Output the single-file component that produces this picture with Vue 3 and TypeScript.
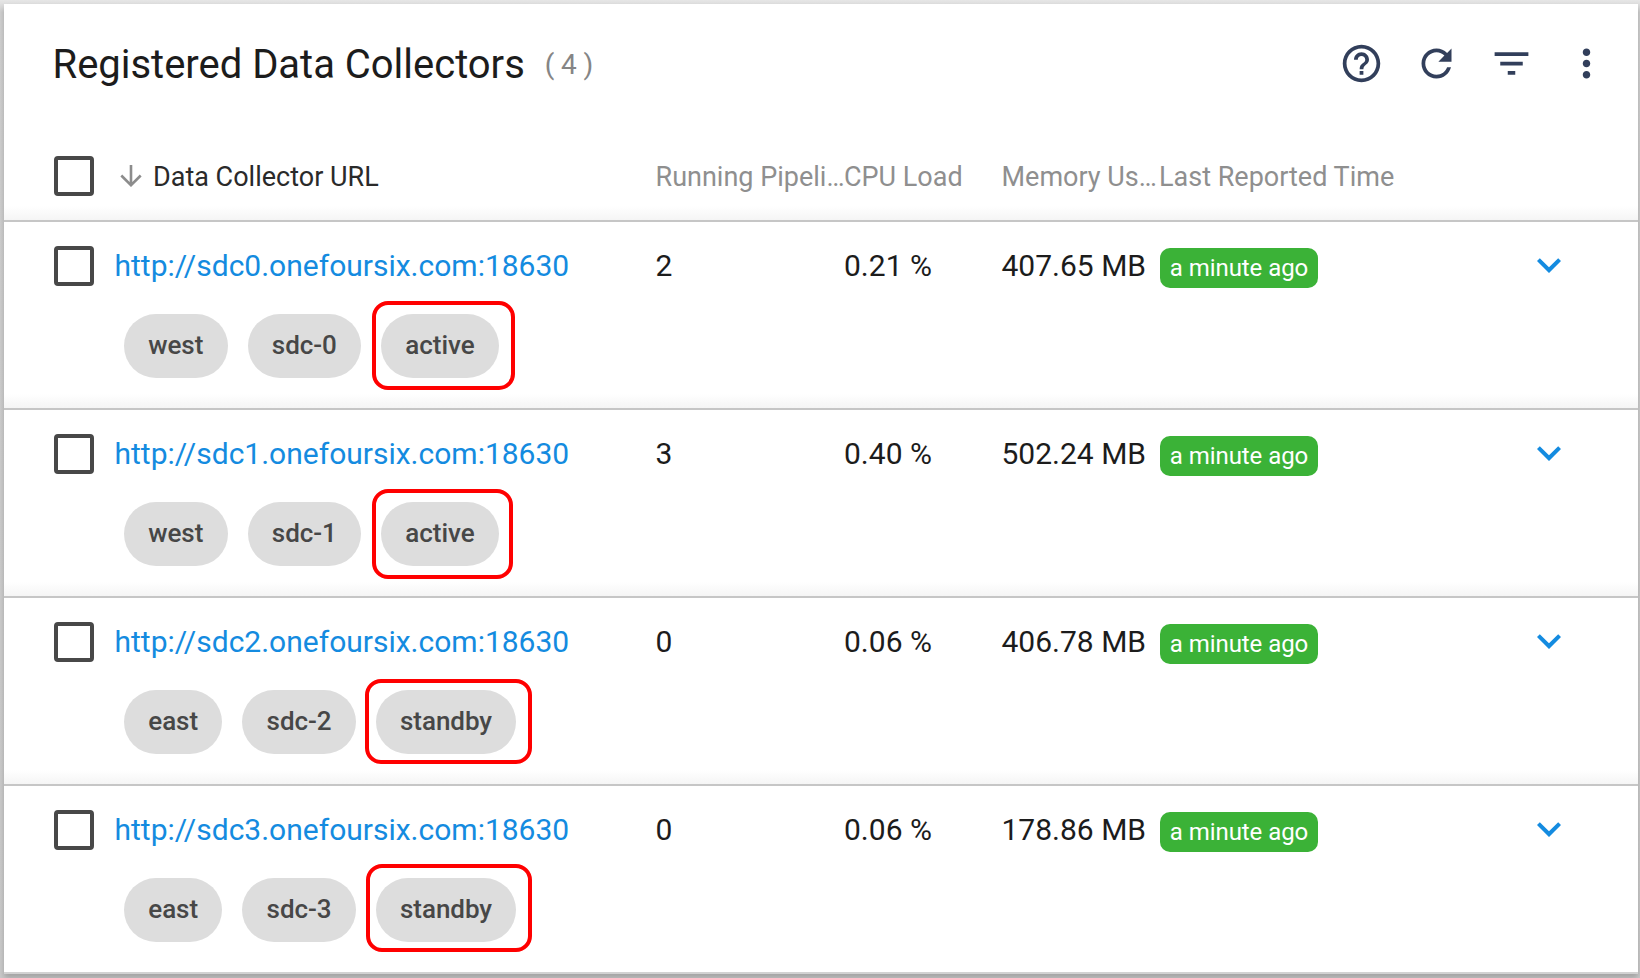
<script setup lang="ts">
interface Tag {
  label: string
  mark?: string
}
interface Collector {
  url: string
  pipelines: number
  cpu: string
  memory: string
  tags: Tag[]
}

const collectors: Collector[] = [
  { url: 'http://sdc0.onefoursix.com:18630', pipelines: 2, cpu: '0.21 %', memory: '407.65 MB', tags: [{ label: 'west' }, { label: 'sdc-0' }, { label: 'active', mark: 'm0' }] },
  { url: 'http://sdc1.onefoursix.com:18630', pipelines: 3, cpu: '0.40 %', memory: '502.24 MB', tags: [{ label: 'west' }, { label: 'sdc-1' }, { label: 'active', mark: 'm1' }] },
  { url: 'http://sdc2.onefoursix.com:18630', pipelines: 0, cpu: '0.06 %', memory: '406.78 MB', tags: [{ label: 'east' }, { label: 'sdc-2' }, { label: 'standby', mark: 'm2' }] },
  { url: 'http://sdc3.onefoursix.com:18630', pipelines: 0, cpu: '0.06 %', memory: '178.86 MB', tags: [{ label: 'east' }, { label: 'sdc-3' }, { label: 'standby', mark: 'm3' }] },
]
</script>

<template>
  <main class="page">
    <section class="card">
      <header class="head panel">
        <div class="titlebar">
          <h1>Registered Data Collectors</h1>
          <span class="count">(4)</span>
          <div class="actions">
            <svg viewBox="0 0 24 24"><path d="M11 18h2v-2h-2v2zm1-16C6.480 2 2 6.480 2 12s4.480 10 10 10 10-4.480 10-10S17.520 2 12 2zm0 18c-4.410 0-8-3.590-8-8s3.590-8 8-8 8 3.590 8 8-3.590 8-8 8zm0-14c-2.210 0-4 1.790-4 4h2c0-1.100.9-2 2-2s2 .9 2 2c0 2-3 1.750-3 5h2c0-2.250 3-2.500 3-5 0-2.210-1.790-4-4-4z" /></svg>
            <svg viewBox="0 0 24 24"><path d="M17.650 6.350C16.200 4.900 14.210 4 12 4c-4.420 0-7.990 3.580-7.990 8s3.570 8 7.990 8c3.730 0 6.840-2.550 7.730-6h-2.080c-.82 2.330-3.040 4-5.650 4-3.310 0-6-2.690-6-6s2.690-6 6-6c1.660 0 3.140.69 4.220 1.780L13 11h7V4l-2.350 2.350z" /></svg>
            <svg viewBox="0 0 24 24"><path d="M10 18h4v-2h-4v2zM3 6v2h18V6H3zm3 7h12v-2H6v2z" /></svg>
            <svg viewBox="0 0 24 24"><path d="M12 8c1.100 0 2-.9 2-2s-.9-2-2-2-2 .9-2 2 .9 2 2 2zm0 2c-1.100 0-2 .9-2 2s.9 2 2 2 2-.9 2-2-.9-2-2-2zm0 6c-1.100 0-2 .9-2 2s.9 2 2 2 2-.9 2-2-.9-2-2-2z" /></svg>
          </div>
        </div>
        <div class="grid columns">
          <span class="box"></span>
          <span class="sorted">
            <svg viewBox="0 0 22 22"><path d="M11 0v20M1.300 10.500L11 20.200l9.700-9.700" /></svg>
            <span>Data Collector URL</span>
          </span>
          <span class="name">Running Pipeli…</span>
          <span class="name">CPU Load</span>
          <span class="name">Memory Us…</span>
          <span class="name">Last Reported Time</span>
        </div>
      </header>
      <article v-for="c in collectors" :key="c.url" class="row panel">
        <div class="grid cells">
          <span class="box"></span>
          <a class="url value">{{ c.url }}</a>
          <span class="value">{{ c.pipelines }}</span>
          <span class="value">{{ c.cpu }}</span>
          <span class="value">{{ c.memory }}</span>
          <span class="badge">a minute ago</span>
          <svg class="chevron" viewBox="0 0 24 24"><path d="M16.590 8.590L12 13.170 7.410 8.590 6 10l6 6 6-6z" /></svg>
        </div>
        <div class="tags">
          <span v-for="t in c.tags" :key="t.label" class="tag">
            {{ t.label }}
            <i v-if="t.mark" class="mark" :class="t.mark"></i>
          </span>
        </div>
      </article>
    </section>
  </main>
</template>

<style>
body { margin: 0; background: #ccc; }
</style>

<style scoped>
.page {
  box-sizing: border-box;
  width: 1640px;
  height: 978px;
  padding: 4px 2px 0 4px;
  overflow: hidden;
  background: linear-gradient(#e6e6e6 0, #d0d0d0 12px, #cacaca 100%);
  font-family: Roboto, sans-serif;
  color: #1c1c1c;
}
.card { box-shadow: 0 4px 6px rgba(0, 0, 0, 0.2); }
.panel {
  box-sizing: border-box;
  border-bottom: 2px solid #c6c6c6;
  background: linear-gradient(#fff calc(100% - 14px), #f5f5f5);
}
.panel:last-child { background: #fff; border-color: #d2d2d2; }
.head { height: 218px; }
.row { height: 188px; }
.titlebar {
  display: flex;
  align-items: center;
  height: 119px;
  padding-left: 48.500px;
}
h1 { margin: 3px 0 0; font-size: 40px; font-weight: 400; line-height: 48px; letter-spacing: -0.020px; }
.count { margin: 1px 0 0 20px; font-size: 28px; letter-spacing: 6.700px; color: #858585; }
.actions { display: flex; gap: 30px; margin: 0 29.500px 0 auto; }
.actions svg { width: 45px; height: 45px; fill: #323f5b; }
.grid {
  display: grid;
  grid-template-columns: 60.500px 541px 188.500px 157.500px 158.500px 364.500px 48px;
  align-items: center;
  padding-left: 50px;
  white-space: nowrap;
}
.columns { height: 98px; font-size: 27px; color: #8f8f8f; padding-top: 1px; box-sizing: border-box; margin-top: 4px; }
.columns .name:last-child { margin-left: -1px; }
.columns .box { margin-top: -1px; }
.sorted { display: flex; align-items: center; color: #2a2a2a; }
.sorted svg { width: 22px; height: 22px; margin: -1px 11px 0 5.500px; fill: none; stroke: #8c8c8c; stroke-width: 2.600px; }
.box { box-sizing: border-box; width: 40px; height: 40px; border: 4px solid #484848; border-radius: 4px; }
.cells { height: 88px; font-size: 30px; }
.value { margin-top: -2px; }
.url { color: #148be0; }
.badge {
  justify-self: start;
  width: 158px;
  height: 40px;
  margin-top: 4px;
  border-radius: 10px;
  background: #3bb237;
  color: #fff;
  font-size: 24px;
  line-height: 41px;
  text-align: center;
  letter-spacing: -0.050px;
}
.chevron { width: 48px; height: 48px; fill: #148be0; margin-top: -3px; }
.tags { display: flex; gap: 20px; padding: 4px 0 0 120px; }
.tag {
  position: relative;
  height: 64px;
  padding: 0 24.250px;
  border-radius: 32px;
  background: #ddd;
  color: #474747;
  font-size: 26px;
  font-weight: 500;
  letter-spacing: -0.050px;
  line-height: 62px;
}
.mark { position: absolute; border: 4px solid #f00; border-radius: 16px; }
.m0 { inset: -13px -16px -12px -9px; }
.m1 { inset: -13px -14px -13px -9px; }
.m2 { inset: -11px -16px -10px -11px; }
.m3 { inset: -14px -16px -10px -10px; }
</style>
